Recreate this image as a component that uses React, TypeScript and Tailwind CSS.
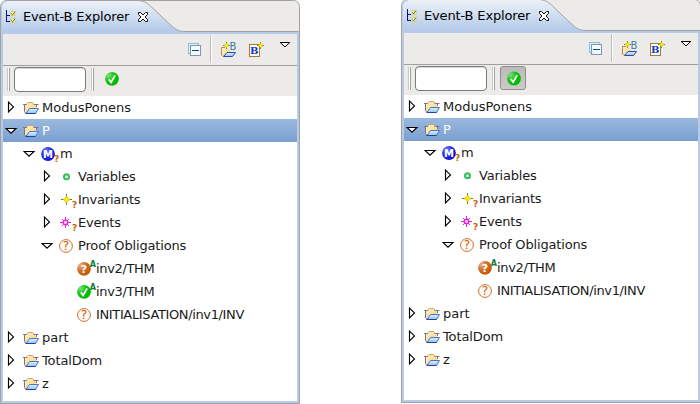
import type { ReactNode } from "react";

const FONT = "font-['DejaVu_Sans',sans-serif]";

type IconKind =
  | "folder" | "machine" | "variables" | "invariants" | "events"
  | "pending" | "pendingAuto" | "doneAuto";

type Item = {
  label: string;
  icon: IconKind;
  level: number;
  toggle?: "open" | "closed";
  selected?: boolean;
  spacing?: string;
};

function Toggle({ state }: { state?: "open" | "closed" }) {
  return (
    <svg className="shrink-0" width="18" height="23" viewBox="0 0 18 23" fill="none" stroke="#000" strokeWidth="1.15">
      {state === "closed" && <path d="M3.500 6V15.800l5-4.900z" fill="#fff" />}
      {state === "open" && <path d="M1 9.500h10L6 14.200z" fill="#fff" />}
    </svg>
  );
}

function Glyph({ x, y, size, fill, bold, children }: {
  x: number; y: number; size: number; fill: string; bold?: boolean; children: ReactNode;
}) {
  return (
    <text x={x} y={y} fontSize={size} fill={fill} stroke="none" textAnchor="middle"
      fontWeight={bold ? 700 : 400} fontFamily="DejaVu Sans, sans-serif">
      {children}
    </text>
  );
}

function CheckBall({ cx, cy }: { cx: number; cy: number }) {
  return (
    <g>
      <circle cx={cx} cy={cy} r="6.9" fill="url(#green)" />
      <path d={`M${cx - 3.2} ${cy + 0.6}l2.300 3 4-7`} fill="none" stroke="#fff" strokeWidth="1.8" />
    </g>
  );
}

function ItemIcon({ kind }: { kind: IconKind }) {
  return (
    <svg className="shrink-0" width="19" height="23" viewBox="0 0 19 23">
      {kind === "folder" && (
        <g>
          <path d="M1.500 16V8.500H3.500L5.500 6.500H9.500L11 8.500H13.500V12L10 16.500H2z" fill="url(#cream)" />
          <path d="M0 8.500H4M10.500 8.500H15.500" stroke="#7c7698" fill="none" />
          <path d="M3.500 8L5.500 6.500H9.500L11 8" stroke="#c9a45c" fill="none" />
          <path d="M1.500 8.500V15.500L2.500 17M13.500 8.500V11" stroke="#76719a" fill="none" />
          <path d="M3 17.500L6.500 12.500H15.500L12.500 17.500z" fill="url(#sky)" stroke="#4c74cc" />
          <path d="M2.500 17.500H12.500" stroke="#2440a8" />
        </g>
      )}
      {kind === "machine" && (
        <g>
          <circle cx="7" cy="12" r="6.900" fill="url(#blue)" />
          <Glyph x={7} y={15.600} size={10} fill="#fff" bold>M</Glyph>
          <Glyph x={15.500} y={19.800} size={9} fill="#c8640e" bold>?</Glyph>
        </g>
      )}
      {kind === "variables" && (
        <circle cx="7.500" cy="11.700" r="2.500" fill="#d8f5dc" stroke="#35bf58" strokeWidth="2" />
      )}
      {kind === "invariants" && (
        <g>
          <path d="M7.500 6v11M2 11.500h11" stroke="#77701c" />
          <path d="M7.500 7.800l1.300 2.400 2.400 1.300-2.400 1.300-1.300 2.400-1.300-2.400-2.400-1.300 2.400-1.300z" fill="#ffee00" stroke="#c2ae00" strokeWidth=".6" />
          <Glyph x={15.500} y={20} size={9} fill="#c8640e" bold>?</Glyph>
        </g>
      )}
      {kind === "events" && (
        <g>
          <path d="M6.500 6v11M1 11.500h11M3 8l7 7M10 8l-7 7" stroke="#c23ab4" />
          <circle cx="6.500" cy="11.500" r="2.200" fill="#fff" stroke="#ff18ee" strokeWidth="1.600" />
          <Glyph x={15.500} y={20} size={9} fill="#c8640e" bold>?</Glyph>
        </g>
      )}
      {kind === "pending" && (
        <g>
          <circle cx="7" cy="12" r="6.400" fill="#fffaf5" stroke="#d0702e" />
          <Glyph x={7} y={16.300} size={12} fill="#c8600e">?</Glyph>
        </g>
      )}
      {kind === "pendingAuto" && (
        <g>
          <circle cx="7" cy="11.800" r="6.900" fill="url(#orange)" />
          <Glyph x={7} y={15.800} size={11} fill="#fff" bold>?</Glyph>
          <Glyph x={15.800} y={10} size={8} fill="#0d7d37" bold>A</Glyph>
        </g>
      )}
      {kind === "doneAuto" && (
        <g>
          <CheckBall cx={7} cy={11.800} />
          <Glyph x={15.800} y={10} size={8} fill="#0d7d37" bold>A</Glyph>
        </g>
      )}
    </svg>
  );
}

const INDENT = ["pl-[2px]", "pl-[20px]", "pl-[38px]", "pl-[56px]"];

function Row({ item }: { item: Item }) {
  return (
    <div
      className={`flex h-[23px] items-center ${INDENT[item.level]} ${
        item.selected ? "bg-linear-to-b from-[#9bb9de] to-[#7a9fd0] text-white" : "text-[#1a1a1a]"
      }`}
    >
      <Toggle state={item.toggle} />
      <ItemIcon kind={item.icon} />
      <span className={`text-[13px] leading-[23px] whitespace-pre ${item.spacing ?? ""}`}>{item.label}</span>
    </div>
  );
}

function Star({ x, y }: { x: number; y: number }) {
  return (
    <g transform={`translate(${x} ${y})`}>
      <path d="M0-3.500v7M-3.500 0h7" stroke="#8a8100" />
      <path d="M0-2.500L.8-.8 2.500 0 .8.800 0 2.500-.8.800-2.500 0-.8-.8z" fill="#ff0" stroke="#c8bc00" strokeWidth=".7" />
    </g>
  );
}

function Header() {
  return (
    <div className="relative h-[34px] shrink-0">
      <svg className="absolute inset-0" width="300" height="34" viewBox="0 0 300 34">
        <path d="M0 34V6L2 2 6 0H294L298 2 300 6V34z" fill="#edebea" />
        <path d="M1 32h298v2H1z" fill="#b5cbe9" />
        <path d="M.5 34V6.500C1 3 3 .5 6.500 .5H137C144 .5 148 3.500 152 7.500L170 24.500C175 29 178 31.500 185 31.500V34z" fill="url(#tab)" />
        <path d="M1.500 34V7C2 4 4 1.500 7 1.500" fill="none" stroke="#b5cbe9" />
        <path d="M.5 34V6.500C1 3 3 .5 6.500 .5H293.500C297 .5 299 3 299.500 6.500V34M137 .5C144 .5 148 3.500 152 7.500L170 24.500C175 29 178 31.500 185 31.500H299" fill="none" stroke="#a3a2a1" />
      </svg>
      <div className="relative flex h-[32px] items-center pt-px pl-[6px]">
        <svg width="11" height="15" viewBox="0 0 11 15" fill="none">
          <path d="M.5 1v12M0 6.500h4M0 12.500h4" stroke="#10108c" />
          <rect x="5" y="2.500" width="4" height="4" fill="#e7f3c9" stroke="#edc36d" />
          <rect x="5" y="9.500" width="4" height="4" fill="#e7f3c9" stroke="#edc36d" />
          <path d="M5.500 4.500l1 1.300 2.500-3M5.500 11.500l1 1.300 2.500-3" stroke="#2b9b35" />
        </svg>
        <span className="ml-[6px] w-[114px] text-[13px] leading-[32px] tracking-[-0.15px] whitespace-pre text-black">Event-B Explorer</span>
        <svg width="12" height="12" viewBox="0 0 12 12">
          <path d="M1.500 1.500h2L6 4l2.500-2.500h2v2L8 6l2.500 2.500v2h-2L6 8l-2.500 2.500h-2v-2L4 6 1.500 3.500z" fill="#fff" stroke="#111" />
        </svg>
      </div>
    </div>
  );
}

function ActionBar() {
  return (
    <div className="flex h-[32px] shrink-0 items-start border-b border-[#a09f9e] bg-[#edebea] pl-[185px]">
      <svg className="mt-[9px]" width="14" height="14" viewBox="0 0 14 14">
        <rect x=".5" y=".5" width="10" height="10" fill="#d9effa" stroke="#9dbbcb" />
        <rect x="2.500" y="2.500" width="10" height="10" fill="#f3fbff" stroke="#7e96b5" />
        <path d="M4 7.500h7" stroke="#0b4c91" />
      </svg>
      <div className="mt-px ml-[8px] h-[28px] w-[2px] border-r border-l border-r-white border-l-[#bdbcbb]" />
      <svg className="mt-[8px] ml-[9px]" width="16" height="16" viewBox="0 0 16 16">
        <path d="M1.500 13V6.500H8.500V10L5 14H2z" fill="url(#cream)" />
        <path d="M4 5.500H.5V13L2 14.500" fill="none" stroke="#b58b46" />
        <path d="M2.500 14.500L6 10.500H14.500L11.500 14.500z" fill="url(#sky)" stroke="#2747ac" />
        <Star x={5.500} y={3.500} />
        <Glyph x={12} y={8.200} size={10} fill="#397aa6">B</Glyph>
      </svg>
      <svg className="mt-[8px] ml-[12px]" width="16" height="16" viewBox="0 0 16 16">
        <rect x=".5" y="2.500" width="10" height="12" fill="#f7fbff" stroke="#a57b2b" />
        <text x="5.300" y="12" textAnchor="middle" fontSize="10" fontWeight="700" fontFamily="DejaVu Serif, serif" fill="#1736c6">B</text>
        <Star x={11.500} y={3.500} />
      </svg>
      <svg className="mt-[7px] ml-[14px]" width="12" height="8" viewBox="0 0 12 8">
        <path d="M1.200 1.500h9.600L6 5.900z" fill="#fff" stroke="#000" />
      </svg>
    </div>
  );
}

function Grip() {
  return <div className="h-[23px] w-[3px] border-r border-l border-r-[#a3a2a1] border-l-[#c9c8c7] bg-white" />;
}

function FilterBar({ pressed }: { pressed?: boolean }) {
  return (
    <div className="flex h-[30px] shrink-0 items-start bg-[#edebea] pt-px pl-[4px]">
      <div className="mt-px"><Grip /></div>
      <div className="ml-[4px] h-[25px] w-[72px] rounded-[4px] border border-[#7c7b7a] bg-white shadow-[inset_0_1px_0_#d8d8d8]" />
      <div className="mt-px ml-[5px]"><Grip /></div>
      <div
        className={
          pressed
            ? "ml-[5px] h-[24px] w-[26px] rounded-[3px] border border-[#908f8e] bg-linear-to-b from-[#bdbbba] to-[#cdcbca] pt-[4px] pl-[6px]"
            : "ml-[5px] h-[24px] w-[26px] pt-[4px] pl-[6px]"
        }
      >
        <svg width="15" height="15" viewBox="0 0 15 15">
          <CheckBall cx={7} cy={pressed ? 7.5 : 7.8} />
        </svg>
      </div>
    </div>
  );
}

function Explorer({ items, pressed }: { items: Item[]; pressed?: boolean }) {
  return (
    <div className="flex h-[404px] w-[300px] shrink-0 flex-col">
      <Header />
      <div className="flex flex-1 border-x border-b border-[#a3a2a1]">
        <div className="flex flex-1 flex-col border-2 border-t-0 border-[#b5cbe9] bg-white">
          <ActionBar />
          <FilterBar pressed={pressed} />
          {items.map((item) => (
            <Row key={item.label} item={item} />
          ))}
        </div>
      </div>
    </div>
  );
}

const ITEMS: Item[] = [
  { label: "ModusPonens", icon: "folder", level: 0, toggle: "closed" },
  { label: "P", icon: "folder", level: 0, toggle: "open", selected: true },
  { label: "m", icon: "machine", level: 1, toggle: "open" },
  { label: "Variables", icon: "variables", level: 2, toggle: "closed", spacing: "tracking-[-0.2px]" },
  { label: "Invariants", icon: "invariants", level: 2, toggle: "closed", spacing: "tracking-[-0.24px]" },
  { label: "Events", icon: "events", level: 2, toggle: "closed", spacing: "tracking-[-0.2px]" },
  { label: "Proof Obligations", icon: "pending", level: 2, toggle: "open", spacing: "tracking-[-0.16px]" },
  { label: "inv2/THM", icon: "pendingAuto", level: 3, spacing: "tracking-[-0.35px]" },
  { label: "inv3/THM", icon: "doneAuto", level: 3, spacing: "tracking-[-0.35px]" },
  { label: "INITIALISATION/inv1/INV", icon: "pending", level: 3, spacing: "tracking-[-0.36px]" },
  { label: "part", icon: "folder", level: 0, toggle: "closed" },
  { label: "TotalDom", icon: "folder", level: 0, toggle: "closed", spacing: "tracking-[-0.12px]" },
  { label: "z", icon: "folder", level: 0, toggle: "closed" },
];

function Gradients() {
  return (
    <svg className="absolute" width="0" height="0">
      <defs>
        <linearGradient id="tab" x1="0" y1="0" x2="0" y2="1">
          <stop offset="0" stopColor="#edf2f9" />
          <stop offset=".9" stopColor="#b5cbe9" />
        </linearGradient>
        <linearGradient id="cream" x1="0" y1="0" x2="1" y2="1">
          <stop offset="0" stopColor="#fff0c4" />
          <stop offset="1" stopColor="#fbd27a" />
        </linearGradient>
        <linearGradient id="sky" x1="0" y1="0" x2="0" y2="1">
          <stop offset="0" stopColor="#dff3fc" />
          <stop offset="1" stopColor="#8fc4f2" />
        </linearGradient>
        <radialGradient id="blue" cx=".35" cy=".3" r=".75">
          <stop offset="0" stopColor="#7b86ff" />
          <stop offset=".5" stopColor="#2530f5" />
          <stop offset="1" stopColor="#0b0fd0" />
        </radialGradient>
        <radialGradient id="green" cx=".25" cy=".25" r=".7">
          <stop offset="0" stopColor="#7be07b" />
          <stop offset=".6" stopColor="#0fc40f" />
          <stop offset="1" stopColor="#00bb00" />
        </radialGradient>
        <radialGradient id="orange" cx=".25" cy=".25" r=".75">
          <stop offset="0" stopColor="#e9b088" />
          <stop offset=".6" stopColor="#d0691c" />
          <stop offset="1" stopColor="#c65c0c" />
        </radialGradient>
      </defs>
    </svg>
  );
}

export default function App() {
  return (
    <div className={`flex h-[404px] w-[700px] gap-[101px] overflow-hidden bg-white ${FONT}`}>
      <Gradients />
      <Explorer items={ITEMS} />
      <div className="-mt-px">
        <Explorer items={ITEMS.filter((item) => item.label !== "inv3/THM")} pressed />
      </div>
    </div>
  );
}
